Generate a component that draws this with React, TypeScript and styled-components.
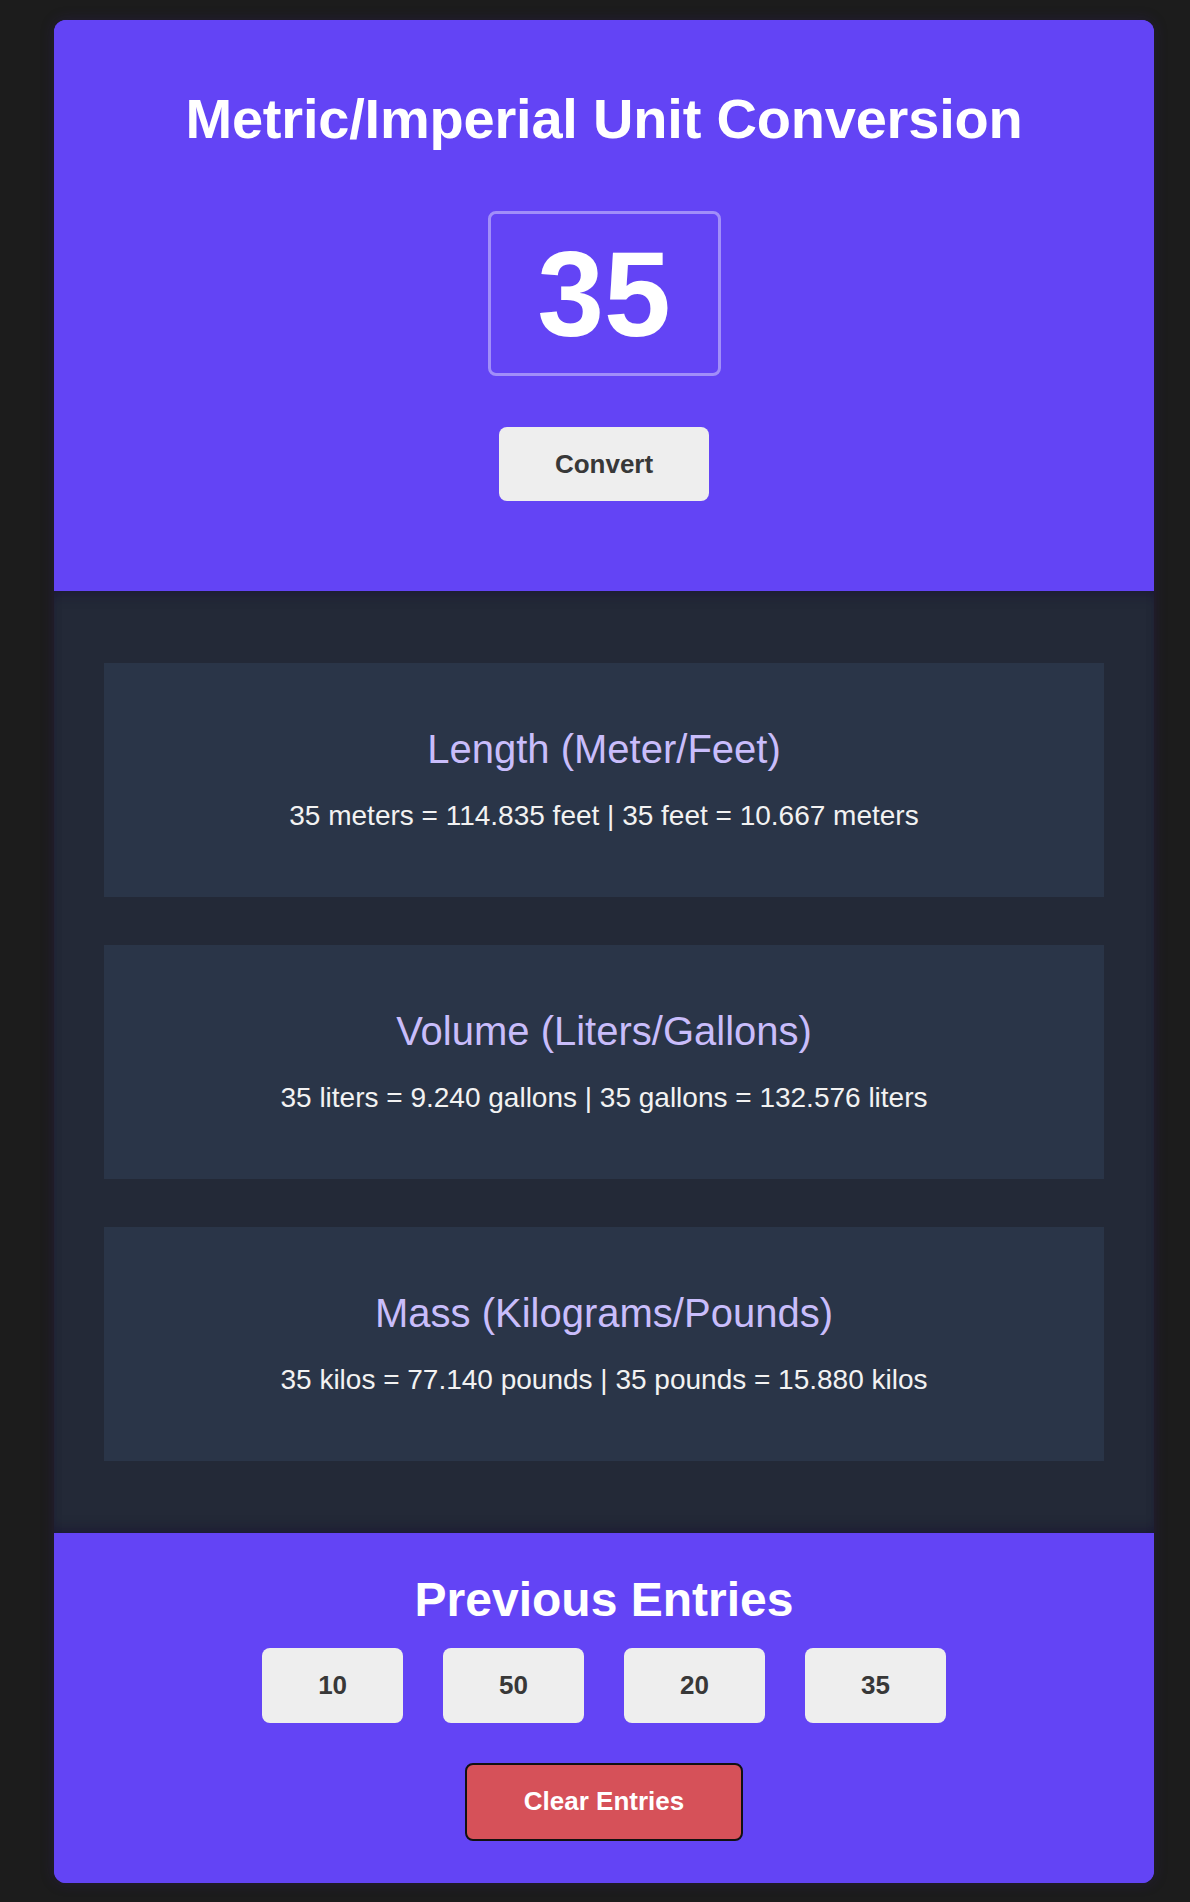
import React from "react";
import styled, { createGlobalStyle } from "styled-components";

const GlobalStyle = createGlobalStyle`
  html, body {
    margin: 0;
    padding: 0;
    background: #1c1c1c;
  }
  body {
    font-family: "Liberation Sans", Arial, Helvetica, sans-serif;
  }
  * { box-sizing: border-box; }
`;

const Page = styled.div`
  padding: 20px 36px 19px 54px;
`;

const Card = styled.main`
  width: 1100px;
  border-radius: 12px;
  overflow: hidden;
  background: #6344f5;
  box-shadow: 0 0 14px rgba(60, 30, 140, 0.25);
`;

const Header = styled.header`
  background: #6344f5;
  display: flex;
  flex-direction: column;
  align-items: center;
  padding: 65px 0 90px;
`;

const Title = styled.h1`
  margin: 0;
  font-size: 56px;
  line-height: 1.2;
  font-weight: 700;
  color: #ffffff;
  letter-spacing: -0.2px;
`;

const NumberBox = styled.div`
  margin-top: 59px;
  width: 233px;
  height: 165px;
  border: 3px solid rgba(255, 255, 255, 0.4);
  border-radius: 8px;
  display: flex;
  align-items: center;
  justify-content: center;
  font-size: 120px;
  font-weight: 700;
  color: #ffffff;
  line-height: 1;
`;

const LightButton = styled.button<{ $top?: number; $height?: number }>`
  margin-top: ${(p) => p.$top ?? 0}px;
  height: ${(p) => p.$height ?? 75}px;
  padding: 0 56px;
  border: none;
  border-radius: 8px;
  background: #eeeeee;
  color: #383838;
  font-family: inherit;
  font-size: 26px;
  font-weight: 700;
  cursor: pointer;
`;

const Results = styled.section`
  background: #232937;
  padding: 72px 50px;
  display: flex;
  flex-direction: column;
  gap: 48px;
  box-shadow: inset 0 10px 14px -8px rgba(20, 10, 50, 0.55),
    inset 0 -10px 14px -8px rgba(20, 10, 50, 0.55);
`;

const ResultBox = styled.div`
  height: 234px;
  background: #2a3548;
  padding-top: 62px;
  display: flex;
  flex-direction: column;
  align-items: center;
`;

const ResultTitle = styled.h3`
  margin: 0;
  font-size: 40px;
  line-height: 1.2;
  font-weight: 400;
  color: #c9bdfb;
`;

const ResultText = styled.p`
  margin: 26px 0 0;
  font-size: 28px;
  line-height: 1.2;
  color: #f2f2f2;
`;

const History = styled.section`
  background: #6344f5;
  padding: 38px 0 42px;
  display: flex;
  flex-direction: column;
  align-items: center;
`;

const HistoryTitle = styled.h2`
  margin: 0;
  font-size: 48px;
  line-height: 1.2;
  font-weight: 700;
  color: #ffffff;
`;

const EntryRow = styled.div`
  margin-top: 19px;
  display: flex;
  gap: 40px;
  justify-content: center;
`;

const ClearButton = styled.button`
  margin-top: 40px;
  height: 78px;
  padding: 0 57px;
  border: 2px solid #111111;
  border-radius: 8px;
  background: #d65159;
  color: #ffffff;
  font-family: inherit;
  font-size: 26px;
  font-weight: 700;
  cursor: pointer;
`;

const value = 35;
const entries = [10, 50, 20, 35];

const conversions = [
  {
    title: "Length (Meter/Feet)",
    text: `${value} meters = ${(value * 3.281).toFixed(3)} feet | ${value} feet = ${(value / 3.281).toFixed(3)} meters`,
  },
  {
    title: "Volume (Liters/Gallons)",
    text: `${value} liters = ${(value * 0.264).toFixed(3)} gallons | ${value} gallons = ${(value / 0.264).toFixed(3)} liters`,
  },
  {
    title: "Mass (Kilograms/Pounds)",
    text: `${value} kilos = ${(value * 2.204).toFixed(3)} pounds | ${value} pounds = ${(value / 2.204).toFixed(3)} kilos`,
  },
];

export default function App() {
  return (
    <>
      <GlobalStyle />
      <Page>
        <Card>
          <Header>
            <Title>Metric/Imperial Unit Conversion</Title>
            <NumberBox>{value}</NumberBox>
            <LightButton $top={51} $height={74}>
              Convert
            </LightButton>
          </Header>
          <Results>
            {conversions.map((c) => (
              <ResultBox key={c.title}>
                <ResultTitle>{c.title}</ResultTitle>
                <ResultText>{c.text}</ResultText>
              </ResultBox>
            ))}
          </Results>
          <History>
            <HistoryTitle>Previous Entries</HistoryTitle>
            <EntryRow>
              {entries.map((e, i) => (
                <LightButton key={i}>{e}</LightButton>
              ))}
            </EntryRow>
            <ClearButton>Clear Entries</ClearButton>
          </History>
        </Card>
      </Page>
    </>
  );
}
